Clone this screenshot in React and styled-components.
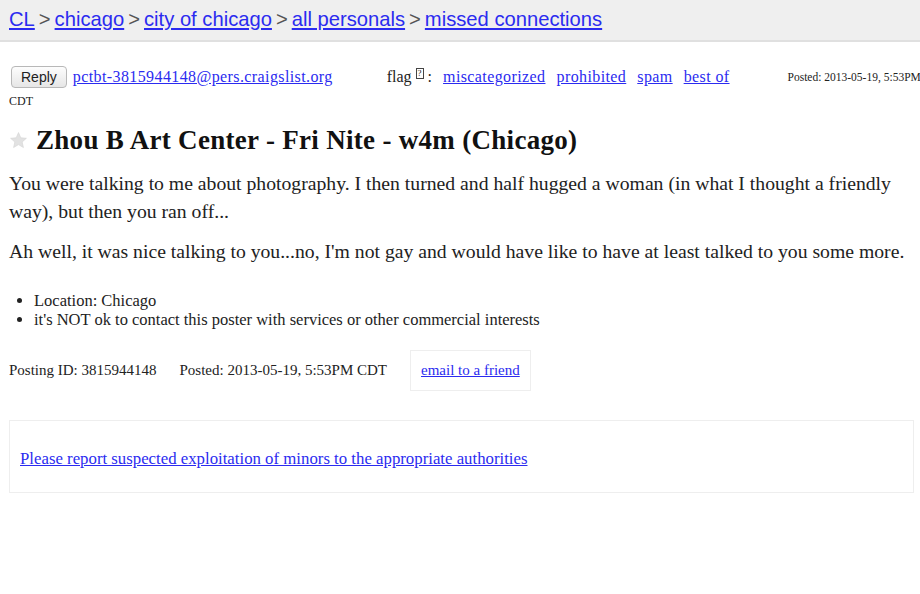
import styled, { createGlobalStyle } from 'styled-components';

const GlobalStyle = createGlobalStyle`
    html, body {
        margin: 0;
        padding: 0;
        background: #fff;
        overflow: hidden;
    }
    body {
        font-family: "Liberation Serif", "Times New Roman", serif;
        color: #222;
    }
`;

const crumbs = ['CL', 'chicago', 'city of chicago', 'all personals', 'missed connections'];
const flags = ['miscategorized', 'prohibited', 'spam', 'best of'];

export default function App() {
    return (
        <>
            <GlobalStyle />
            <Page>
                <Breadcrumbs>
                    {crumbs.map((c, i) => (
                        <span key={c}>
                            {i > 0 && <Sep>&gt;</Sep>}
                            <a href="#">{c}</a>
                        </span>
                    ))}
                </Breadcrumbs>

                <Body>
                    <TopRow>
                        <ReplyButton>Reply</ReplyButton>
                        <EmailLink href="#">pctbt-3815944148@pers.craigslist.org</EmailLink>
                        <Flag>
                            flag <sup><QMark>?</QMark></sup> :
                        </Flag>
                        <FlagLinks>
                            {flags.map(f => <a key={f} href="#">{f}</a>)}
                        </FlagLinks>
                        <PostedSmall>Posted: 2013-05-19, 5:53PM</PostedSmall>
                    </TopRow>
                    <Tz>CDT</Tz>

                    <Title>
                        <Star viewBox="0 0 24 24">
                            <path d="M12 2l2.9 6.6 7.1.6-5.4 4.7 1.6 7-6.2-3.7-6.2 3.7 1.6-7L2 9.2l7.1-.6z" fill="#e2e2e2" stroke="#d4d4d4" strokeWidth="0.8" />
                        </Star>
                        Zhou B Art Center - Fri Nite - w4m (Chicago)
                    </Title>

                    <PostBody>
                        <p>You were talking to me about photography. I then turned and half hugged a woman (in what I thought a friendly way), but then you ran off...</p>
                        <p>Ah well, it was nice talking to you...no, I'm not gay and would have like to have at least talked to you some more.</p>
                    </PostBody>

                    <Notices>
                        <li>Location: Chicago</li>
                        <li>it's NOT ok to contact this poster with services or other commercial interests</li>
                    </Notices>

                    <InfoRow>
                        <span>Posting ID: 3815944148</span>
                        <span>Posted: 2013-05-19, 5:53PM CDT</span>
                        <FriendBox><a href="#">email to a friend</a></FriendBox>
                    </InfoRow>

                    <ReportBox>
                        <a href="#">Please report suspected exploitation of minors to the appropriate authorities</a>
                    </ReportBox>
                </Body>
            </Page>
        </>
    );
}

const Page = styled.div`
    width: 920px;
    height: 594px;
    overflow: hidden;
    a {
        color: #2b2bf0;
    }
`;

const Breadcrumbs = styled.div`
    height: 42px;
    background: #efefef;
    border-bottom: 2px solid #e0e0e0;
    box-sizing: border-box;
    padding: 8px 0 0 9px;
    font-family: "Liberation Sans", Arial, sans-serif;
    font-size: 20.2px;
    white-space: nowrap;
`;

const Sep = styled.span`
    color: #555;
    margin: 0 4px;
`;

const Body = styled.div`
    padding: 0 6px 0 9px;
`;

const TopRow = styled.div`
    display: flex;
    align-items: center;
    white-space: nowrap;
    margin-top: 24px;
    height: 22px;
`;

const ReplyButton = styled.button`
    font-family: "Liberation Sans", Arial, sans-serif;
    font-size: 14px;
    color: #222;
    height: 22px;
    padding: 0 9px;
    margin: 0 6px 0 2px;
    background: linear-gradient(#fdfdfd, #e6e6e6);
    border: 1px solid #b8b8b8;
    border-radius: 4px;
`;

const EmailLink = styled.a`
    font-size: 16px;
    letter-spacing: 0.4px;
`;

const Flag = styled.span`
    font-size: 16px;
    margin-left: 54px;
    sup {
        font-size: 9px;
        vertical-align: 6px;
    }
`;

const QMark = styled.span`
    display: inline-block;
    border: 1px solid #444;
    padding: 0 1px;
    line-height: 9px;
`;

const FlagLinks = styled.span`
    display: flex;
    gap: 11px;
    margin-left: 11px;
    font-size: 16px;
    letter-spacing: 0.4px;
`;

const PostedSmall = styled.span`
    font-size: 11.5px;
    margin-left: 58px;
`;

const Tz = styled.div`
    font-size: 12px;
    margin-top: 6px;
`;

const Title = styled.h2`
    display: flex;
    align-items: center;
    gap: 8px;
    margin: 16px 0 0;
    font-size: 27px;
    letter-spacing: 0.3px;
    font-weight: bold;
    color: #111;
`;

const Star = styled.svg`
    width: 19px;
    height: 19px;
`;

const PostBody = styled.div`
    margin-top: 13px;
    font-size: 19.7px;
    line-height: 28px;
    width: 900px;
    p {
        margin: 0 0 12px;
    }
`;

const Notices = styled.ul`
    margin: 26px 0 0;
    padding-left: 25px;
    font-size: 16.5px;
    line-height: 19px;
`;

const InfoRow = styled.div`
    display: flex;
    align-items: center;
    gap: 23px;
    margin-top: 21px;
    font-size: 15px;
`;

const FriendBox = styled.div`
    border: 1px solid #eee;
    padding: 11px 10px;
    font-size: 15px;
`;

const ReportBox = styled.div`
    margin-top: 29px;
    border: 1px solid #eee;
    height: 73px;
    box-sizing: border-box;
    display: flex;
    align-items: center;
    padding: 4px 10px 0;
    font-size: 16.8px;
`;
